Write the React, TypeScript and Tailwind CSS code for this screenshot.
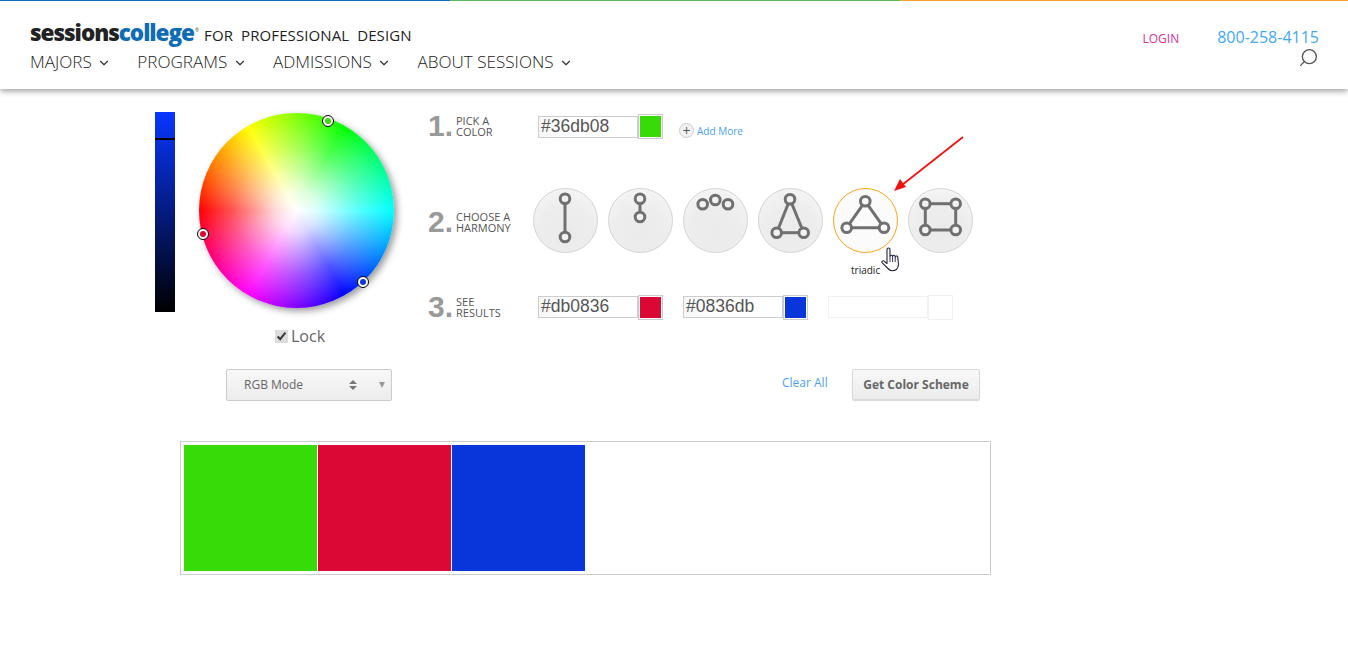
import React from "react";
import { ChevronDown, Search } from "lucide-react";

const sans = "font-['Open_Sans',sans-serif]";

function NavItem({ label }: { label: string }) {
  return (
    <span className="flex items-center gap-[5.5px] text-[17.1px] leading-[24px] font-light text-[#222]">
      {label}
      <ChevronDown size={14} strokeWidth={2} className="mt-[2px] text-[#333]" />
    </span>
  );
}

function Step({ n, a, b, shift }: { n: string; a: string; b: string; shift: string }) {
  return (
    <div className={`flex w-[110px] shrink-0 items-center ${shift}`}>
      <span className="w-[28px] font-['Liberation_Sans',sans-serif] text-[30px] leading-[28px] font-bold text-[#999]">{n}</span>
      <span className="text-[11px] leading-[11px] text-[#555]">
        {a}
        <br />
        {b}
      </span>
    </div>
  );
}

function ColorField({ value, color }: { value: string; color: string }) {
  return (
    <div className="flex h-[25px] w-[125px] items-center">
      <div className="h-[22px] w-[100px] border border-[#ccc] bg-[linear-gradient(90deg,#f6f6f6,#fff_30%)] pl-[2px] font-['Liberation_Sans',sans-serif] text-[17.5px] leading-[19px] text-[#555]">
        {value}
      </div>
      <div className="h-[25px] w-[25px] border border-[#ccc] bg-white p-px">
        <div className="h-full w-full" style={{ background: color }} />
      </div>
    </div>
  );
}

type Node = [number, number];

function Harmony({ nodes, lines, active }: { nodes: Node[]; lines?: [number, number][]; active?: boolean }) {
  const fill = active ? "#fafafa" : "#f1f1f1";
  return (
    <div
      className={
        active
          ? "h-[65px] w-[65px] rounded-full border border-[#f9a51a] bg-[#fbfbfb]"
          : "h-[65px] w-[65px] rounded-full border border-[#d4d4d4] bg-[radial-gradient(circle_at_50%_70%,#ebebeb,#ededed_50%,#f8f8f8)]"
      }
    >
      <svg width="65" height="65" viewBox="0 0 65 65" className="-m-px">
        {lines?.map(([a, b], i) => (
          <line key={i} x1={nodes[a][0]} y1={nodes[a][1]} x2={nodes[b][0]} y2={nodes[b][1]} stroke="#707070" strokeWidth="3" />
        ))}
        {nodes.map(([x, y], i) => (
          <circle key={i} cx={x} cy={y} r="4.8" fill={fill} stroke="#707070" strokeWidth="3" />
        ))}
      </svg>
    </div>
  );
}

function Marker({ className, color }: { className: string; color: string }) {
  return (
    <div className={`absolute flex h-[12px] w-[12px] items-center justify-center rounded-full border border-black bg-white ${className}`}>
      <div className="h-[6px] w-[6px] rounded-full" style={{ background: color }} />
    </div>
  );
}

export default function App() {
  return (
    <div className={`relative min-h-[648px] w-[1348px] overflow-hidden bg-white ${sans}`}>
      <div className="flex h-px">
        <div className="w-[450px] bg-[#0a6ebd]" />
        <div className="w-[450px] bg-[#5cb85c]" />
        <div className="flex-1 bg-[#f5a030]" />
      </div>
      <header className="flex h-[88px] justify-between pl-[30px] pr-[29px] shadow-[0_2px_6px_rgba(0,0,0,0.4)]">
        <div>
          <div className="mt-[21px] flex h-[26px] items-center">
            <span className="-mt-[4px] text-[22.5px] leading-[26px] font-extrabold tracking-[-1.05px] text-[#222]">
              sessions<span className="text-[#0f6cb5]">college</span>
            </span>
            <span className="mb-[11px] ml-px text-[5px] leading-[6px] text-[#555]">®</span>
            <span className="ml-[5px] text-[15px] leading-[26px] tracking-[0.1px] whitespace-pre text-[#222]">FOR  PROFESSIONAL  DESIGN</span>
          </div>
          <nav className="mt-[2px] flex gap-[26px]">
            <NavItem label="MAJORS" />
            <NavItem label="PROGRAMS" />
            <NavItem label="ADMISSIONS" />
            <NavItem label="ABOUT SESSIONS" />
          </nav>
        </div>
        <div className="flex flex-col items-end pt-[22px]">
          <div className="flex items-center gap-[38px]">
            <span className="mt-[4px] text-[12px] leading-[24px] text-[#d6338f]">LOGIN</span>
            <span className="text-[16px] leading-[22px] text-[#3fa9f5]">800-258-4115</span>
          </div>
          <Search size={21} strokeWidth={1.5} className="-mt-[4px] -scale-x-100 text-[#555]" />
        </div>
      </header>

      <main className="flex pl-[155px] pt-[23px]">
        <div className="w-[273px] shrink-0">
          <div className="flex">
            <div className="relative h-[200px] w-[20px] bg-[linear-gradient(#0836ff,#000)]">
              <div className="absolute top-[26px] h-[2px] w-full bg-black" />
            </div>
            <div className="relative mt-px mb-px ml-[24px] h-[195px] w-[195px] rounded-full bg-[radial-gradient(closest-side,#fff,#ffffffd8_22%,#ffffffa0_40%,#ffffff55_65%,#fff0),conic-gradient(from_270deg,#f00,#ff0_60deg,#0f0_120deg,#0ff_180deg,#00f_240deg,#f0f_300deg,#f00)] shadow-[3px_3px_7px_rgba(0,0,0,0.4)]">
              <Marker className="top-[2px] left-[123px]" color="#36db08" />
              <Marker className="top-[115px] left-[-2px]" color="#db0836" />
              <Marker className="top-[163px] left-[158px]" color="#0836db" />
            </div>
          </div>
          <div className="mt-[14px] ml-[120px] flex h-[20px] items-center gap-[3px] text-[16px] text-[#666]">
            <input type="checkbox" checked readOnly className="h-[13px] w-[13px] accent-[#dddddd]" />
            Lock
          </div>
          <div className="mt-[23px] ml-[71px] flex h-[32px] w-[166px] items-center rounded-[2px] border border-[#ccc] bg-[linear-gradient(#f8f8f8,#ececec)] pl-[17px] text-[12px] text-[#666]">
            <span className="w-[105px]">RGB Mode</span>
            <span className="flex w-[30px] flex-col gap-[2px]">
              <span className="h-0 w-0 border-x-[4px] border-b-[4px] border-x-transparent border-b-[#777]" />
              <span className="h-0 w-0 border-x-[4px] border-t-[4px] border-x-transparent border-t-[#777]" />
            </span>
            <span className="h-0 w-0 border-x-[3px] border-t-[6px] border-x-transparent border-t-[#999]" />
          </div>
        </div>

        <div className="w-[560px]">
          <div className="mt-[2px] flex h-[25px] items-center">
            <Step n="1." a="PICK A" b="COLOR" shift="mb-[2px]" />
            <ColorField value="#36db08" color="#36db08" />
            <div className="mt-[8px] ml-[16px] flex items-center gap-[3px] text-[10px] leading-[14px] text-[#4a9ff0]">
              <span className="flex h-[15px] w-[15px] items-center justify-center rounded-full border border-[#ccc] bg-[#f2f2f2] text-[14px] leading-[13px] text-[#555]">+</span>
              Add More
            </div>
          </div>

          <div className="mt-[49px] flex items-center">
            <Step n="2." a="CHOOSE A" b="HARMONY" shift="mt-[2px]" />
            <div className="-ml-[5px] flex gap-[10px]">
              <Harmony nodes={[[32, 10.7], [32, 49]]} lines={[[0, 1]]} />
              <Harmony nodes={[[32, 10.7], [32, 29]]} lines={[[0, 1]]} />
              <Harmony nodes={[[19.7, 16.3], [32.3, 12], [45, 16.3]]} />
              <Harmony nodes={[[32, 11.3], [18.7, 44.7], [45.7, 44.7]]} lines={[[0, 1], [1, 2], [2, 0]]} />
              <Harmony active nodes={[[32.3, 13.3], [13.7, 39.7], [51, 39.7]]} lines={[[0, 1], [1, 2], [2, 0]]} />
              <Harmony nodes={[[17.3, 15.7], [47.7, 15.7], [47.7, 42], [17.3, 42]]} lines={[[0, 1], [1, 2], [2, 3], [3, 0]]} />
            </div>
          </div>

          <div className="mt-[40px] flex items-center">
            <Step n="3." a="SEE" b="RESULTS" shift="mt-0" />
            <div className="flex gap-[20px]">
              <ColorField value="#db0836" color="#db0836" />
              <ColorField value="#0836db" color="#0836db" />
              <div className="flex h-[25px] w-[125px] items-center">
                <div className="h-[22px] w-[100px] border border-[#f1f1f1]" />
                <div className="h-[25px] w-[25px] border border-[#f1f1f1]" />
              </div>
            </div>
          </div>

          <div className="mt-[48px] flex items-center pl-[354px]">
            <span className="mb-[3px] w-[70px] text-[12px] text-[#4a9ff0]">Clear All</span>
            <div className="flex h-[31px] w-[128px] items-center justify-center rounded-[2px] border border-[#d8d8d8] bg-[linear-gradient(#f8f8f8,#ececec)] text-[12px] font-bold text-[#666] shadow-[0_1px_1px_rgba(0,0,0,0.15)]">
              Get Color Scheme
            </div>
          </div>
        </div>
      </main>

      <section className="mt-[40px] ml-[180px] flex h-[134px] w-[811px] gap-px border border-[#ccc] p-[3px]">
        <div className="h-full w-[133px] bg-[#36db08]" />
        <div className="h-full w-[133px] bg-[#db0836]" />
        <div className="h-full w-[133px] bg-[#0836db]" />
      </section>

      <span className="absolute top-[264px] left-[851px] text-[10px] leading-[12px] text-[#222]">triadic</span>

      <svg className="absolute top-[135px] left-[890px]" width="76" height="60" viewBox="0 0 76 60">
        <line x1="73" y1="2" x2="12" y2="50" stroke="#f01010" strokeWidth="1.7" />
        <polygon points="4,56 10,44 16,52" fill="#f01010" />
      </svg>

      <svg className="absolute top-[247px] left-[881px]" width="19" height="25" viewBox="0 0 19 25">
        <path
          d="M6 2.500a1.500 1.500 0 0 1 3 0V9.500a1.300 1.300 0 0 1 2.600 0a1.300 1.300 0 0 1 2.600 .5a1.300 1.300 0 0 1 2.600 .7L17.500 17c0 2.500-.8 4-2 5.500C13 24.200 9.500 24 8 22.500L1.200 15.800c-.9-1.100.6-2.600 1.800-1.700L6 16.500Z"
          fill="#fff"
          stroke="#23233a"
          strokeWidth="1.100"
          strokeLinejoin="round"
        />
        <path d="M9 9.500V15M11.600 9.500V15M14.200 10V15" fill="none" stroke="#23233a" strokeWidth="0.900" />
      </svg>
    </div>
  );
}
